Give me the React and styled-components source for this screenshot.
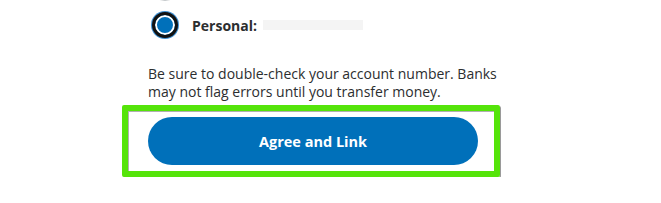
import React from "react";
import styled, { createGlobalStyle } from "styled-components";

const Global = createGlobalStyle`
  html, body { margin: 0; padding: 0; background: #fff; }
  body { font-family: "Open Sans", "Noto Sans", Arial, sans-serif; color: #2c2e2f; overflow: hidden; }
`;

const Wrapper = styled.div`
  margin-left: 122px;
  width: 378px;
  display: flex;
  flex-direction: column;
`;

const RadioRow = styled.label`
  display: flex;
  align-items: center;
  gap: 14px;
  padding-left: 30px;
  height: 26px;
  margin-top: ${(p) => p.$mt || 0}px;
`;

const Radio = styled.span`
  box-sizing: border-box;
  width: 26px;
  height: 26px;
  border-radius: 50%;
  flex: none;
  ${(p) =>
    p.$checked
      ? `
    border: 3px solid #111;
    background: #0070ba;
    box-shadow: inset 0 0 0 2px #fff, 0 0 0 1px #3d8fd1;
  `
      : `
    border: 1px solid #c4c8ca;
    background: #fff;
  `}
`;

const LabelGroup = styled.span`
  display: flex;
  align-items: center;
  gap: 6px;
`;

const Label = styled.span`
  font-weight: 700;
  font-size: 14px;
  color: #2c2e2f;
`;

const Masked = styled.span`
  width: 100px;
  height: 10px;
  background: #f4f4f4;
`;

const Notice = styled.p`
  margin: 27px 0 0;
  padding-left: 26px;
  font-size: 14px;
  line-height: 18px;
  color: #2c2e2f;
`;

const Highlight = styled.div`
  box-sizing: border-box;
  margin-top: 4px;
  width: 378px;
  height: 72px;
  border: 6px solid #55e40a;
  border-radius: 2px;
  box-shadow: 1px 1px 0 #9a9a9a, inset 1px 1px 0 #b0b0b0;
  display: flex;
  align-items: center;
  padding-left: 20px;
`;

const Button = styled.button`
  width: 330px;
  height: 48px;
  border: none;
  border-radius: 24px;
  background: #0070ba;
  color: #fff;
  font-family: "Open Sans", "Noto Sans", Arial, sans-serif;
  font-weight: 700;
  font-size: 14.5px;
  cursor: pointer;
`;

export default function App() {
  return (
    <>
      <Global />
      <Wrapper>
        <RadioRow $mt={-25}>
          <Radio />
        </RadioRow>
        <RadioRow $mt={11}>
          <Radio $checked />
          <LabelGroup>
            <Label>Personal:</Label>
            <Masked />
          </LabelGroup>
        </RadioRow>
        <Notice>
          Be sure to double-check your account number. Banks
          <br />
          may not flag errors until you transfer money.
        </Notice>
        <Highlight>
          <Button>Agree and Link</Button>
        </Highlight>
      </Wrapper>
    </>
  );
}
